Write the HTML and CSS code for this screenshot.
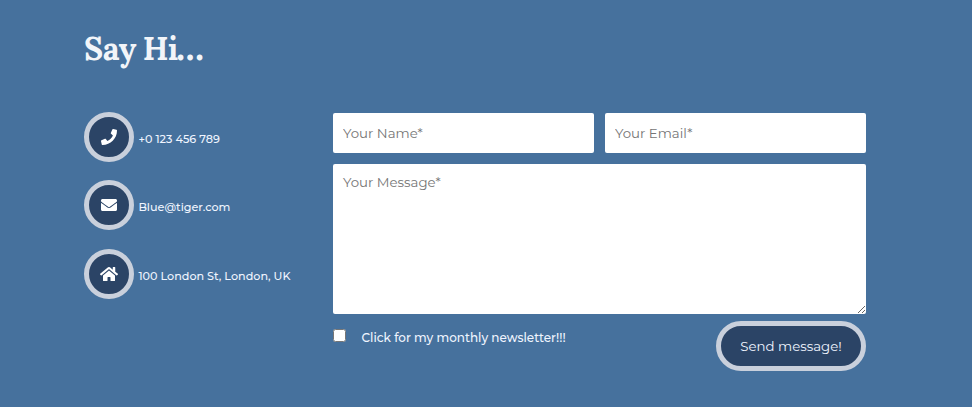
FILE: index.html
```html
<!DOCTYPE html>
<html lang="en">
<head>
<meta charset="utf-8">
<title>Say Hi</title>
<link rel="stylesheet" href="styles.css">
</head>
<body>
<section class="contact">
  <h2 class="title">Say Hi<span class="dots">...</span></h2>
  <div class="columns">
    <ul class="details">
      <li class="detail">
        <span class="badge"><svg width="16" height="16" viewBox="0 0 512 512"><path d="M493.4 24.6l-104-24c-11.3-2.6-22.9 3.3-27.5 13.9l-48 112c-4.2 9.8-1.4 21.3 6.9 28l60.6 49.6c-36 76.7-98.9 140.5-177.2 177.2l-49.6-60.6c-6.8-8.3-18.2-11.1-28-6.9l-112 48C3.9 366.5-2 378.1.6 389.4l24 104C27.1 504.2 36.7 512 48 512c256.1 0 464-207.5 464-464 0-11.2-7.7-20.9-18.6-23.4z"/></svg></span>
        <span class="label">+0 123 456 789</span>
      </li>
      <li class="detail">
        <span class="badge"><svg width="16" height="16" viewBox="0 0 512 512"><path d="M502.3 190.8c3.9-3.1 9.7-.2 9.7 4.7V400c0 26.5-21.5 48-48 48H48c-26.5 0-48-21.5-48-48V195.6c0-5 5.7-7.8 9.7-4.7 22.4 17.4 52.1 39.5 154.1 113.6 21.1 15.4 56.7 47.8 92.2 47.6 35.7.3 72-32.8 92.3-47.6 102-74.1 131.6-96.3 154-113.7zM256 320c23.2.4 56.6-29.2 73.4-41.4 132.7-96.3 142.8-104.7 173.4-128.7 5.8-4.5 9.2-11.5 9.2-18.9v-19c0-26.5-21.5-48-48-48H48c-26.5 0-48 21.5-48 48v19c0 7.4 3.4 14.3 9.2 18.9 30.6 23.9 40.7 32.4 173.4 128.7 16.8 12.2 50.2 41.8 73.4 41.4z"/></svg></span>
        <span class="label">Blue@tiger.com</span>
      </li>
      <li class="detail">
        <span class="badge"><svg width="18" height="16" viewBox="0 0 576 512"><path d="M280.37 148.26L96 300.11V464a16 16 0 0 0 16 16l112.06-.29a16 16 0 0 0 15.92-16V368a16 16 0 0 1 16-16h64a16 16 0 0 1 16 16v95.64a16 16 0 0 0 16 16.05L464 480a16 16 0 0 0 16-16V300L295.67 148.26a12.19 12.19 0 0 0-15.3 0zM571.6 251.47L488 182.56V44.05a12 12 0 0 0-12-12h-56a12 12 0 0 0-12 12v72.61L318.47 43a48 48 0 0 0-61 0L4.34 251.47a12 12 0 0 0-1.6 16.9l25.5 31A12 12 0 0 0 45.15 301l235.22-193.74a12.19 12.19 0 0 1 15.3 0L530.9 301a12 12 0 0 0 16.9-1.6l25.5-31a12 12 0 0 0-1.7-16.93z"/></svg></span>
        <span class="label">100 London St, London, UK</span>
      </li>
    </ul>
    <form class="form">
      <div class="row">
        <input class="field" type="text" placeholder="Your Name*" aria-label="Your Name">
        <input class="field" type="text" placeholder="Your Email*" aria-label="Your Email">
      </div>
      <textarea class="field message" placeholder="Your Message*" aria-label="Your Message"></textarea>
      <div class="footer">
        <label class="newsletter"><input class="check" type="checkbox"><span>Click for my monthly newsletter!!!</span></label>
        <button class="send" type="button">Send message!</button>
      </div>
    </form>
  </div>
</section>
</body>
</html>
```
FILE: styles.css
```css
* { box-sizing: border-box; }
body {
  margin: 0;
  height: 407px;
  overflow: hidden;
  background: #46719d;
  color: #f0f5ff;
  font-family: Montserrat, Inter, "Open Sans", sans-serif;
}
.contact { width: 782px; margin-left: 84px; padding-top: 28px; }
.title {
  margin: 0;
  height: 84px;
  color: #f2f5f9;
  font: bold 32px/42px Lora, "Liberation Serif", serif;
  letter-spacing: -0.4px;
  word-spacing: -1.2px;
}
.dots { margin-left: -1.8px; font-size: 39px; letter-spacing: 0.4px; line-height: 0; }
.columns { display: grid; grid-template-columns: 249px 533px; }
.details {
  display: flex;
  flex-direction: column;
  gap: 18.4px;
  margin: 0;
  padding: 0;
  list-style: none;
}
.detail { display: flex; align-items: center; gap: 4.4px; height: 50px; }
.badge {
  display: flex;
  align-items: center;
  justify-content: center;
  width: 50px;
  height: 50px;
  border: 5px solid #c9d0dc;
  border-radius: 50%;
  background: #2b4466;
}
.badge svg { display: block; fill: #fff; }
.label { padding-top: 4px; font-size: 11.2px; font-weight: 500; white-space: nowrap; }
.form { padding-top: 1px; }
.row { display: grid; grid-template-columns: 1fr 1fr; gap: 11px; }
.field {
  display: block;
  width: 100%;
  height: 40px;
  padding: 0 10px;
  border: 0;
  border-radius: 2px;
  background: #fff;
  font: 13.333px/17px Montserrat, Inter, "Open Sans", sans-serif;
}
.field::placeholder { color: #757575; opacity: 1; }
.message { height: 150px; margin-top: 11px; padding: 10px; resize: vertical; }
.footer { display: flex; justify-content: space-between; align-items: flex-start; padding-top: 7px; }
.newsletter {
  display: flex;
  align-items: flex-start;
  gap: 15.5px;
  padding-top: 8px;
  font-size: 12px;
  font-weight: 500;
  line-height: 17px;
}
.check { width: 13px; height: 13px; margin: 0; }
.send {
  width: 150px;
  height: 50px;
  padding: 0;
  border: 5px solid #c9d0dc;
  border-radius: 25px;
  background: #2b4466;
  color: #f0f5ff;
  font: 13.333px Montserrat, Inter, "Open Sans", sans-serif;
}
```
